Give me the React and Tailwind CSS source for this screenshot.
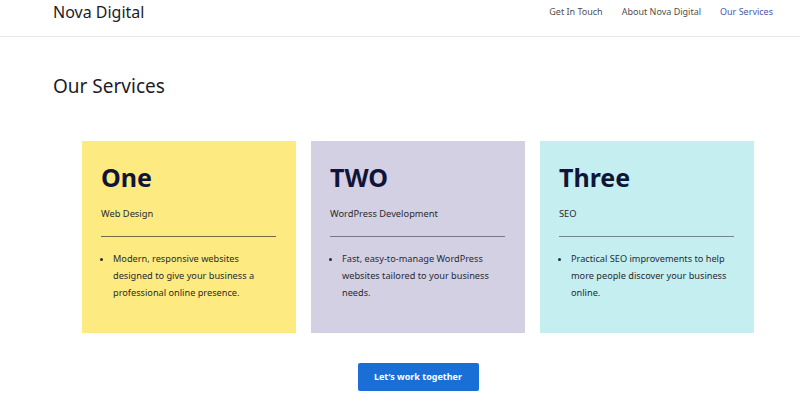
import React from "react";

const cards = [
  { title: "One", sub: "Web Design", text: "Modern, responsive websites designed to give your business a professional online presence.", bg: "bg-[#fdea80]", line: "border-[#6e6a4a]" },
  { title: "TWO", sub: "WordPress Development", text: "Fast, easy-to-manage WordPress websites tailored to your business needs.", bg: "bg-[#d4d0e3]", line: "border-[#77768a]" },
  { title: "Three", sub: "SEO", text: "Practical SEO improvements to help more people discover your business online.", bg: "bg-[#c4eef0]", line: "border-[#6f8a8c]" },
];

export default function App() {
  return (
    <div className="w-[800px] h-[408px] bg-white overflow-hidden" style={{ fontFamily: '"Noto Sans", "Open Sans", sans-serif' }}>
      <header className="h-[37px] border-b border-[#e8e8e8] flex items-center justify-between pl-[53px] pr-[27px]">
        <div className="text-[16px] text-[#1c1c28] -mt-[12px]">Nova Digital</div>
        <nav className="flex gap-[19px] text-[9px] text-[#505050] -mt-[12px]">
          <span>Get In Touch</span>
          <span>About Nova Digital</span>
          <span className="text-[#4a58a8]">Our Services</span>
        </nav>
      </header>
      <h1 className="pl-[53px] mt-[35px] text-[19px] text-[#1c1c28]">Our Services</h1>
      <div className="flex gap-[15px] pl-[82px] mt-[40px]">
        {cards.map((c) => (
          <div key={c.title} className={`${c.bg} w-[214px] h-[192px] pt-[20px] pl-[19px] pr-[20px]`}>
            <div className="text-[25px] font-bold text-[#101538] leading-[32px]">{c.title}</div>
            <div className="text-[9.3px] text-[#2a2a2a] mt-[14px] leading-[14px]">{c.sub}</div>
            <div className={`border-t ${c.line} mt-[15px]`}></div>
            <ul className="list-disc pl-[12px] mt-[13px] text-[9.2px] leading-[17px] text-[#2a2a32]">
              <li>{c.text}</li>
            </ul>
          </div>
        ))}
      </div>
      <div className="flex justify-center pl-[36px] mt-[30px]">
        <button className="w-[121px] h-[28px] bg-[#1a6fd6] text-white text-[9px] font-bold rounded-[2px]">Let’s work together</button>
      </div>
    </div>
  );
}
